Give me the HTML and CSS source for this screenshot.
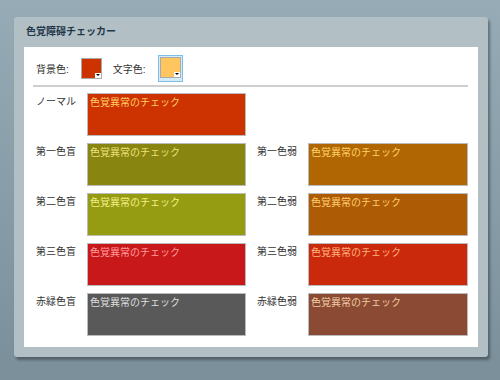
FILE: index.html
```html
<!DOCTYPE html>
<html lang="ja">
<head>
    <meta charset="UTF-8">
    <title>色覚障碍チェッカー</title>
    <link rel="stylesheet" href="styles.css">
</head>
<body>
    <div class="panel">
        <h1>色覚障碍チェッカー</h1>
        <div class="content">
            <div class="toolbar">
                <span class="tool-label">背景色:</span>
                <span class="swatch" style="background-color: #cc3300;"><i class="arrow"></i></span>
                <span class="tool-label">文字色:</span>
                <span class="swatch-wrap"><span class="swatch" style="background-color: #ffc660;"><i class="arrow"></i></span></span>
            </div>
            <div class="grid">
                <div class="label">ノーマル</div>
                <div class="sample" style="background-color: #cc3300; color: #ffcc66;">色覚異常のチェック</div>
                <div class="label right"></div>
                <div></div>

                <div class="label">第一色盲</div>
                <div class="sample" style="background-color: #888510; color: #ece07c;">色覚異常のチェック</div>
                <div class="label right">第一色弱</div>
                <div class="sample" style="background-color: #b06602; color: #ffd069;">色覚異常のチェック</div>

                <div class="label">第二色盲</div>
                <div class="sample" style="background-color: #959c12; color: #f3ee86;">色覚異常のチェック</div>
                <div class="label right">第二色弱</div>
                <div class="sample" style="background-color: #ae5b06; color: #ffcd6c;">色覚異常のチェック</div>

                <div class="label">第三色盲</div>
                <div class="sample" style="background-color: #c8181a; color: #ff9c9c;">色覚異常のチェック</div>
                <div class="label right">第三色弱</div>
                <div class="sample" style="background-color: #cb290c; color: #ffb27e;">色覚異常のチェック</div>

                <div class="label">赤緑色盲</div>
                <div class="sample" style="background-color: #595959; color: #dedede;">色覚異常のチェック</div>
                <div class="label right">赤緑色弱</div>
                <div class="sample" style="background-color: #8a4a33; color: #f0cba2;">色覚異常のチェック</div>
            </div>
        </div>
    </div>
</body>
</html>
```

FILE: styles.css
```css
/* 全体 */
body {
    margin: 0;
    height: 380px;
    background: linear-gradient(#96abb6, #7b8f9a);
    font-family: "Liberation Sans", "Noto Sans CJK JP", sans-serif;
    font-size: 10px;
    color: #333;
    overflow: hidden;
}

.panel {
    width: 454px;
    margin: 17px 0 0 14px;
    padding: 0 10px 10px;
    background-color: #b2bfc5;
    border-radius: 3px;
    box-shadow: 2px 3px 3px rgba(0, 0, 0, 0.35);
}

.panel h1 {
    margin: 0;
    padding-left: 2px;
    height: 30px;
    line-height: 30px;
    font-size: 10px;
    font-weight: bold;
    color: #22384a;
}

.content {
    background-color: #fff;
    padding: 10px 10px 11px 12px;
}

/* 色の選択 */
.toolbar {
    display: flex;
    align-items: center;
    height: 22px;
    padding-bottom: 6px;
    margin-left: -3px;
    padding-left: 3px;
    border-bottom: 2px solid #cfcfcf;
    margin-bottom: 6px;
}

.tool-label {
    margin-right: 12px;
}

.swatch {
    position: relative;
    display: inline-block;
    width: 19px;
    height: 19px;
    border: 1px solid #aaa;
    margin-right: 11px;
}

.swatch-wrap {
    display: inline-block;
    padding: 1px;
    border: 1px solid #7fbce6;
    background-color: #d4ebfa;
}

.swatch-wrap .swatch {
    margin-right: 0;
}

.arrow {
    position: absolute;
    right: 0;
    bottom: 0;
    width: 6px;
    height: 5px;
    background-color: #fff;
}

.arrow::after {
    content: "";
    position: absolute;
    left: 1px;
    top: 1px;
    border-left: 2px solid transparent;
    border-right: 2px solid transparent;
    border-top: 2px solid #000;
}

/* 結果 */
.grid {
    display: grid;
    grid-template-columns: 51px 159px 62px 160px;
    grid-auto-rows: 43px;
    row-gap: 7px;
}

.label {
    padding-top: 2px;
    line-height: 14px;
}

.label.right {
    padding-left: 11px;
}

.sample {
    border: 1px solid #bbb;
    padding: 2px 2px;
    line-height: 14px;
}
```
